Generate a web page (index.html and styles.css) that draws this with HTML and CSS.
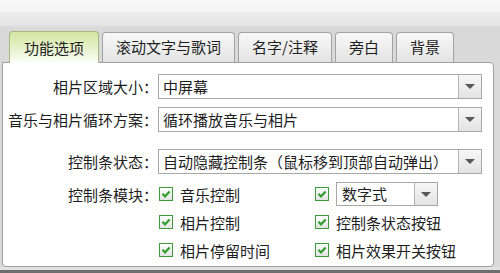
FILE: index.html
```html
<!DOCTYPE html>
<html lang="zh">

<head>
    <meta charset="utf-8">
    <title>功能选项</title>
    <link rel="stylesheet" href="styles.css">
</head>

<body>
    <div class="window">
        <div class="titlebar"></div>
        <div class="tabs">
            <div class="tab active">功能选项</div>
            <div class="tab">滚动文字与歌词</div>
            <div class="tab">名字/注释</div>
            <div class="tab">旁白</div>
            <div class="tab">背景</div>
        </div>
        <div class="panel">
            <div class="form">
                <div class="label">相片区域大小：</div>
                <div class="select"><span class="value">中屏幕</span><span class="arrow"></span></div>

                <div class="label">音乐与相片循环方案：</div>
                <div class="select"><span class="value">循环播放音乐与相片</span><span class="arrow"></span></div>

                <div class="label sep">控制条状态：</div>
                <div class="select sep"><span class="value">自动隐藏控制条（鼠标移到顶部自动弹出）</span><span class="arrow"></span></div>

                <div class="label top">控制条模块：</div>
                <div class="checks">
                    <div class="check"><svg class="box" width="14" height="14" viewBox="0 0 14 14"><defs><linearGradient id="bg" x1="0" y1="0" x2="0" y2="1"><stop offset="0" stop-color="#ffffff"/><stop offset="1" stop-color="#e2e2e2"/></linearGradient></defs><rect x="0.5" y="0.5" width="13" height="13" fill="url(#bg)" stroke="#3f9b3a"/><path d="M3.5 6.8 L6 9.4 L10.6 4.4" fill="none" stroke="#2d9e2d" stroke-width="2.2"/></svg>音乐控制</div>
                    <div class="check"><svg class="box" width="14" height="14" viewBox="0 0 14 14"><rect x="0.5" y="0.5" width="13" height="13" fill="url(#bg)" stroke="#3f9b3a"/><path d="M3.5 6.8 L6 9.4 L10.6 4.4" fill="none" stroke="#2d9e2d" stroke-width="2.2"/></svg><div class="select small"><span class="value">数字式</span><span class="arrow"></span></div></div>
                    <div class="check"><svg class="box" width="14" height="14" viewBox="0 0 14 14"><rect x="0.5" y="0.5" width="13" height="13" fill="url(#bg)" stroke="#3f9b3a"/><path d="M3.5 6.8 L6 9.4 L10.6 4.4" fill="none" stroke="#2d9e2d" stroke-width="2.2"/></svg>相片控制</div>
                    <div class="check"><svg class="box" width="14" height="14" viewBox="0 0 14 14"><rect x="0.5" y="0.5" width="13" height="13" fill="url(#bg)" stroke="#3f9b3a"/><path d="M3.5 6.8 L6 9.4 L10.6 4.4" fill="none" stroke="#2d9e2d" stroke-width="2.2"/></svg>控制条状态按钮</div>
                    <div class="check"><svg class="box" width="14" height="14" viewBox="0 0 14 14"><rect x="0.5" y="0.5" width="13" height="13" fill="url(#bg)" stroke="#3f9b3a"/><path d="M3.5 6.8 L6 9.4 L10.6 4.4" fill="none" stroke="#2d9e2d" stroke-width="2.2"/></svg>相片停留时间</div>
                    <div class="check"><svg class="box" width="14" height="14" viewBox="0 0 14 14"><rect x="0.5" y="0.5" width="13" height="13" fill="url(#bg)" stroke="#3f9b3a"/><path d="M3.5 6.8 L6 9.4 L10.6 4.4" fill="none" stroke="#2d9e2d" stroke-width="2.2"/></svg>相片效果开关按钮</div>
                </div>
            </div>
        </div>
        <div class="footer"></div>
    </div>
</body>

</html>
```

FILE: styles.css
```css
* { margin:0; padding:0; box-sizing:border-box }
html,body { width:500px; height:273px; overflow:hidden; background:#dadada }
body { font-family:"Noto Sans CJK SC", "Noto Sans", sans-serif; font-size:15px; color:#1e1e1e }

.window { display:flex; flex-direction:column; width:500px; height:273px }
.titlebar { height:27px; background:linear-gradient(#f8f8f8 0, #f4f4f4 12px, #ebebeb 13px, #e7e7e7 24px, #dcdcdc 27px) }

/* 选项卡 */
.tabs { height:35px; display:flex; align-items:flex-end; gap:3px; padding-left:9px; background:#d9d9d9 }
.tab { height:30px; line-height:28px; padding:0 13px; border:1px solid #a3a3a3; border-bottom:none; border-radius:4px 4px 0 0; background:linear-gradient(#f8f8f8, #e4e4e4); white-space:nowrap }
.tab.active { position:relative; z-index:1; height:32px; margin-bottom:-1px; line-height:31px; padding:0 14px; border-color:#a4ba82; background:linear-gradient(#d3e8a2 0, #e4f0c4 45%, #f6faea 85%, #ffffff 100%) }

.panel { height:205px; margin:0 6px 0 2px; background:#fff; border:1px solid #a0a0a0; border-radius:0 4px 4px 4px; padding:11px 11px 0 0 }
.footer { flex:1; border-top:3px solid #e2e2e2; background:#6e6e6e }

.form { display:grid; grid-template-columns:155px 1fr; row-gap:8px; align-items:start }
.label { height:25px; line-height:25px; text-align:right; white-space:nowrap }
.sep { margin-top:9px }

/* 下拉框 */
.select { display:flex; height:25px; border:1px solid #a8a8a8; background:#fff }
.select .value { flex:1; line-height:23px; padding-left:4px; white-space:nowrap; overflow:hidden }
.select .arrow { width:23px; border-left:1px solid #b4b4b4; background:linear-gradient(#f7f7f7, #e3e3e3); display:flex; align-items:center; justify-content:center }
.select .arrow::after { content:""; border-left:5px solid transparent; border-right:5px solid transparent; border-top:5px solid #585858 }
.select.small { width:102px; height:24px }
.select.small .value { padding-left:5px; line-height:22px }

/* 复选框 */
.checks { display:grid; grid-template-columns:156px 1fr; row-gap:4px; margin-left:1px }
.check { display:flex; align-items:center; gap:7px; height:24px; white-space:nowrap }
.check .box { flex:none }
```
